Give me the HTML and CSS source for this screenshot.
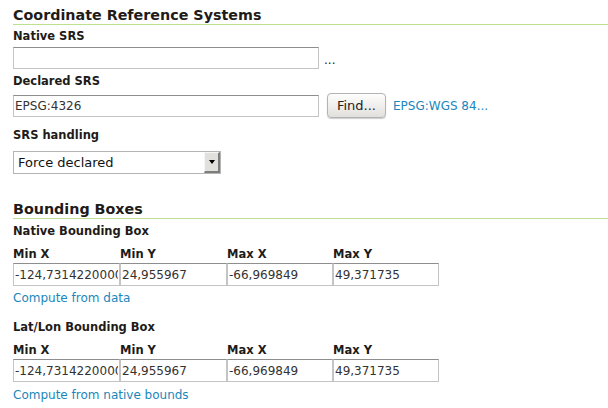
FILE: index.html
```html
<!DOCTYPE html>
<html lang="en">
<head>
    <meta charset="UTF-8">
    <title>Coordinate Reference Systems</title>
    <link rel="stylesheet" href="styles.css">
</head>
<body>

<div class="page">

    <h3 class="section-title">Coordinate Reference Systems</h3>

    <div class="field field-first">
        <label class="field-label">Native SRS</label>
        <div class="field-row">
            <input class="text-input srs-input" type="text" value=""/>
            <span class="dots">...</span>
        </div>
    </div>

    <div class="field">
        <label class="field-label">Declared SRS</label>
        <div class="field-row field-row-button">
            <input class="text-input srs-input" type="text" value="EPSG:4326"/>
            <button class="find-button">Find...</button>
            <a class="link" href="#">EPSG:WGS 84...</a>
        </div>
    </div>

    <div class="field field-handling">
        <label class="field-label">SRS handling</label>
        <div class="select-box">
            <span class="select-value">Force declared</span>
            <span class="select-arrow"><span class="select-triangle"></span></span>
        </div>
    </div>

    <h3 class="section-title section-title-bbox">Bounding Boxes</h3>

    <div class="bbox">
        <label class="field-label">Native Bounding Box</label>
        <div class="bbox-grid">
            <span class="bbox-label">Min X</span>
            <span class="bbox-label">Min Y</span>
            <span class="bbox-label">Max X</span>
            <span class="bbox-label">Max Y</span>
            <input class="text-input" type="text" value="-124,73142200000"/>
            <input class="text-input" type="text" value="24,955967"/>
            <input class="text-input" type="text" value="-66,969849"/>
            <input class="text-input" type="text" value="49,371735"/>
        </div>
        <a class="link" href="#">Compute from data</a>
    </div>

    <div class="bbox bbox-latlon">
        <label class="field-label">Lat/Lon Bounding Box</label>
        <div class="bbox-grid">
            <span class="bbox-label">Min X</span>
            <span class="bbox-label">Min Y</span>
            <span class="bbox-label">Max X</span>
            <span class="bbox-label">Max Y</span>
            <input class="text-input" type="text" value="-124,73142200000"/>
            <input class="text-input" type="text" value="24,955967"/>
            <input class="text-input" type="text" value="-66,969849"/>
            <input class="text-input" type="text" value="49,371735"/>
        </div>
        <a class="link" href="#">Compute from native bounds</a>
    </div>

</div>

</body>
</html>
```

FILE: styles.css
```css
html, body {
    margin: 0;
    padding: 0;
    background: white;
    font-family: "DejaVu Sans", Verdana, sans-serif;
    font-size: 12px;
    color: #1e1b18;
}

.page {
    padding: 7px 0 0 13px;
}

.section-title {
    margin: 0;
    font-size: 14.3px;
    line-height: 17px;
    border-bottom: 1px solid #bde18e;
}

.section-title-bbox {
    margin-top: 27px;
}

.field {
    display: flex;
    flex-direction: column;
    margin-top: 5px;
}

.field-first {
    margin-top: 4px;
}

.field-handling {
    margin-top: 10px;
}

.field-label {
    display: block;
    font-size: 11.5px;
    font-weight: bold;
    line-height: 15px;
}

.field-row {
    display: flex;
    align-items: center;
    margin-top: 3px;
}

.field-row-button {
    margin-top: 4px;
}

.text-input {
    box-sizing: border-box;
    height: 22px;
    margin: 0;
    padding: 0 1px;
    border: 1px solid #c4c4c4;
    border-top-color: #8e8e8e;
    font-family: "DejaVu Sans", Verdana, sans-serif;
    font-size: 12px;
    color: #333;
    background: white;
}

.srs-input {
    width: 306px;
}

.dots {
    margin-left: 5px;
    padding-top: 4px;
}

.find-button {
    box-sizing: border-box;
    width: 59px;
    height: 25px;
    margin-left: 8px;
    padding: 0;
    border: 1px solid #b3b3b3;
    border-radius: 4px;
    background: linear-gradient(#fdfdfd, #e2e0dc);
    box-shadow: 0 1px 1px rgba(0, 0, 0, 0.2);
    font-family: "DejaVu Sans", Verdana, sans-serif;
    font-size: 13px;
    color: #222;
}

.field-row .link {
    margin-left: 7px;
}

.link {
    color: #1a87bb;
    text-decoration: none;
}

/* fake combo box, old gtk look */
.select-box {
    box-sizing: border-box;
    display: flex;
    align-items: center;
    justify-content: space-between;
    width: 208px;
    height: 23px;
    margin-top: 8px;
    border: 1px solid #b5b5b5;
    background: white;
    font-size: 13px;
    color: #111;
}

.select-value {
    padding-left: 4px;
}

.select-arrow {
    box-sizing: border-box;
    display: flex;
    align-items: center;
    justify-content: center;
    width: 16px;
    height: 21px;
    background: #e2e0dd;
    border-top: 1px solid #f6f6f6;
    border-left: 1px solid #f6f6f6;
    border-right: 2px solid #7d7d7d;
    border-bottom: 2px solid #7d7d7d;
}

.select-triangle {
    width: 0;
    height: 0;
    border-left: 3px solid transparent;
    border-right: 3px solid transparent;
    border-top: 4px solid #000;
}

.bbox {
    margin-top: 5px;
}

.bbox-latlon {
    margin-top: 14px;
}

.bbox-grid {
    display: grid;
    grid-template-columns: 107px 107px 106px 106px;
    margin-top: 8px;
    margin-bottom: 5px;
}

.bbox-label {
    font-size: 11.5px;
    font-weight: bold;
    line-height: 14px;
    margin-bottom: 2px;
}

.bbox-grid .text-input {
    width: 100%;
    height: 23px;
}

.bbox .link {
    display: block;
    line-height: 15px;
}

.bbox-latlon .bbox-grid {
    margin-bottom: 6px;
}
```
